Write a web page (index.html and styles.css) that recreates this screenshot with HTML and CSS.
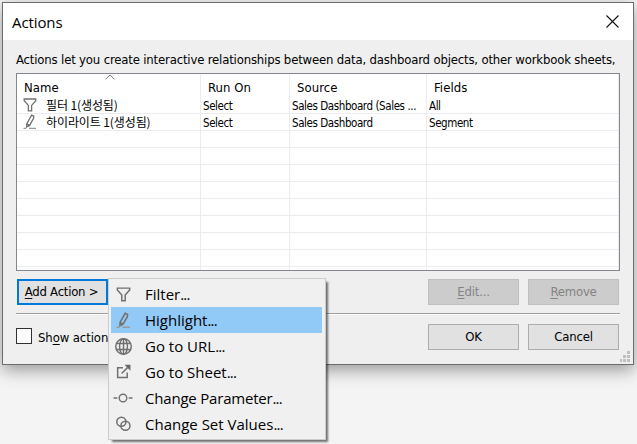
FILE: index.html
```html
<!DOCTYPE html>
<html lang="en">
<head>
<meta charset="utf-8">
<title>Actions</title>
<link rel="stylesheet" href="styles.css">
</head>
<body>
<svg width="0" height="0" class="symbols">
  <symbol id="filter" viewBox="0 0 16 16"><path d="M2.2 2h11.6v1.8L9.6 8.4v5.4H6.4V8.4L2.2 3.8z"/></symbol>
  <symbol id="pen" viewBox="0 0 16 16"><path d="M9.6 1.2l2.2 1-.2 2.2-4 7-3 1.6.2-3.3zM4.8 9.9l2.6 1.5"/><path class="faint" d="M1.5 14.4h2.8M7 14.4h7"/></symbol>
  <symbol id="globe" viewBox="0 0 16 16"><circle cx="8" cy="8" r="7.3"/><ellipse cx="8" cy="8" rx="3.7" ry="7.3"/><path d="M8 .7v14.6M1.5 5.2h13M1.5 10.8h13"/></symbol>
  <symbol id="sheet" viewBox="0 0 16 16"><path d="M7.5 3.5H2.5v9.3h9V8M6.2 9L12 3.2"/><path class="solid" d="M9 .8h5.5v5.5z"/></symbol>
  <symbol id="parameter" viewBox="0 0 20 16"><circle cx="10" cy="8" r="3.8"/><path d="M.5 8h3.8M15.7 8h3.8"/></symbol>
  <symbol id="sets" viewBox="0 0 16 16"><circle cx="6" cy="5.4" r="4.3"/><circle cx="9.8" cy="9.2" r="4.3"/></symbol>
</svg>

<main class="dialog">
  <header class="titlebar">
    <h1>Actions</h1>
    <svg class="close" viewBox="0 0 13 13"><path d="M.5.5l12 12M12.5.5l-12 12"/></svg>
  </header>
  <p class="intro">Actions let you create interactive relationships between data, dashboard objects, other workbook sheets,</p>

  <div class="list">
    <div class="row head">
      <span>Name<svg class="sort" viewBox="0 0 10 6"><path d="M.6 5.2L5 .9l4.4 4.3"/></svg></span><span>Run On</span><span>Source</span><span>Fields</span>
    </div>
    <div class="row">
      <span class="name"><svg class="icon"><use href="#filter"/></svg><b class="ko">필터 1(생성됨)</b></span><span>Select</span><span>Sales Dashboard (Sales ...</span><span>All</span>
    </div>
    <div class="row">
      <span class="name"><svg class="icon"><use href="#pen"/></svg><b class="ko">하이라이트 1(생성됨)</b></span><span>Select</span><span>Sales Dashboard</span><span>Segment</span>
    </div>
    <div class="row"><span></span><span></span><span></span><span></span></div>
    <div class="row"><span></span><span></span><span></span><span></span></div>
    <div class="row"><span></span><span></span><span></span><span></span></div>
    <div class="row"><span></span><span></span><span></span><span></span></div>
    <div class="row"><span></span><span></span><span></span><span></span></div>
    <div class="row"><span></span><span></span><span></span><span></span></div>
    <div class="row"><span></span><span></span><span></span><span></span></div>
    <div class="row"><span></span><span></span><span></span><span></span></div>
    <div class="row"><span></span><span></span><span></span><span></span></div>
  </div>

  <div class="buttons">
    <button class="add"><span><u>A</u>dd Action &gt;</span></button>
    <button class="right" disabled><span><u>E</u>dit...</span></button>
    <button disabled><span><u>R</u>emove</span></button>
  </div>
  <div class="rule"></div>
  <div class="buttons footer">
    <label class="check"><i class="box"></i><span>Sh<u>o</u>w action</span></label>
    <button class="right"><span>OK</span></button>
    <button><span>Cancel</span></button>
  </div>
  <svg class="grip" viewBox="0 0 11 11"><path d="M7 0h3v3H7zM3 4h3v3H3zM7 4h3v3H7zM0 8h2v3H0zM3 8h3v3H3zM7 8h3v3H7z"/></svg>
</main>

<nav class="menu">
  <div class="item"><svg class="icon"><use href="#filter"/></svg><span>Filter<span class="dots">...</span></span></div>
  <div class="item active"><svg class="icon"><use href="#pen"/></svg><span>Highlight<span class="dots">...</span></span></div>
  <div class="item"><svg class="icon"><use href="#globe"/></svg><span>Go to URL<span class="dots">...</span></span></div>
  <div class="item"><svg class="icon"><use href="#sheet"/></svg><span>Go to Sheet<span class="dots">...</span></span></div>
  <div class="item"><svg class="icon wide"><use href="#parameter"/></svg><span class="long">Change Parameter<span class="dots">...</span></span></div>
  <div class="item"><svg class="icon"><use href="#sets"/></svg><span>Change Set Values<span class="dots">...</span></span></div>
</nav>
</body>
</html>
```

FILE: styles.css
```css
* { box-sizing: border-box; }
body {
  margin: 0;
  width: 637px;
  height: 444px;
  overflow: hidden;
  padding: 2px;
  background: #f4f4f4;
  color: #000;
  font-family: "DejaVu Sans Condensed", "DejaVu Sans", "Noto Sans CJK KR", sans-serif;
  font-stretch: condensed;
  white-space: nowrap;
}
.symbols { position: absolute; }
svg { fill: none; stroke: #707070; }
.dialog {
  position: relative;
  width: 632px;
  height: 363px;
  border: 1px solid #6a6d70;
  background: #efefef;
  box-shadow: 0 5px 16px rgba(0, 0, 0, .38);
}
.titlebar {
  display: flex;
  align-items: center;
  justify-content: space-between;
  height: 37px;
  padding: 0 14px 0 9px;
  background: #fff;
}
h1 {
  margin: 0;
  font: 400 15px/20px "Open Sans", sans-serif;
  letter-spacing: -.1px;
}
.close { width: 13px; height: 13px; stroke: #111; stroke-width: 1.1; }
.intro {
  margin: 12px 0 5px 13px;
  font-size: 13px;
  line-height: 16px;
  letter-spacing: -.17px;
}
.list {
  width: 604px;
  height: 198px;
  margin-left: 13px;
  border: 1px solid #828790;
  background: #fff;
  overflow: hidden;
}
.row {
  display: grid;
  grid-template-columns: 184px 89px 137px 192px;
  height: 17px;
  font-size: 11.5px;
  line-height: 18px;
  letter-spacing: -.42px;
}
.row > span {
  padding-left: 2px;
  border-right: 1px solid #ececee;
  border-bottom: 1px solid #ececee;
  overflow: hidden;
}
.row .name { display: flex; align-items: center; padding-left: 5px; gap: 8px; }
.row .icon { width: 16px; height: 16px; stroke-width: 1.3; flex: none; }
.head { height: 23px; font-size: 13px; line-height: 27px; letter-spacing: .05px; }
.head > span { position: relative; padding-left: 7px; border-bottom: 0; }
.sort { position: absolute; left: 88px; top: 0; width: 10px; height: 6px; }
.ko { font-weight: 400; font-size: 12px; letter-spacing: -.1px; font-family: "Noto Sans CJK KR", sans-serif; }
.buttons { display: flex; gap: 9px; margin: 8px 14px 0; }
button {
  width: 91px;
  height: 26px;
  padding: 0;
  border: 1px solid #adadad;
  background: #e1e1e1;
  color: #000;
  font: 13px/20px "DejaVu Sans Condensed", "DejaVu Sans", sans-serif;
  letter-spacing: -.2px;
}
button:disabled { background: #ccc; border-color: #bfbfbf; color: #838383; }
.add { border: 2px solid #0078d7; letter-spacing: -.25px; padding-right: 2px; }
u { text-underline-offset: 2px; text-decoration-thickness: 1px; }
.right { margin-left: auto; }
.rule { height: 2px; margin: 8px 0 0 13px; width: 604px; background: #fff; border-top: 1px solid #a0a0a0; }
.footer { margin: 9px 14px 0 13px; }
.check { display: flex; align-items: center; gap: 6px; font-size: 13px; letter-spacing: -.1px; }
.box { flex: none; width: 16px; height: 16px; margin-top: -2px; border: 1px solid #333; background: #fff; }
.grip { position: absolute; right: 2px; bottom: 2px; width: 11px; height: 11px; fill: #bfbfbf; stroke: none; }
.menu {
  position: absolute;
  left: 108px;
  top: 278px;
  width: 218px;
  height: 162px;
  padding: 2px;
  border: 1px solid #ccc;
  background: #f0f0f0;
  box-shadow: 3px 3px 2px -1px rgba(0, 0, 0, .55);
}
.item {
  display: flex;
  align-items: center;
  width: 211px;
  height: 26px;
  padding-left: 4px;
  gap: 13px;
  font: 15px/26px "Open Sans", sans-serif;
}
.active { background: #91c9f7; }
.item .icon { width: 17px; height: 17px; stroke-width: 1.4; flex: none; }
.item .wide { width: 20px; height: 16px; margin: 0 -1px 0 -2px; }
.long { letter-spacing: -.2px; }
.dots { letter-spacing: -.8px; }
.solid { fill: #666; stroke: none; }
.faint { stroke: #999; }
```
